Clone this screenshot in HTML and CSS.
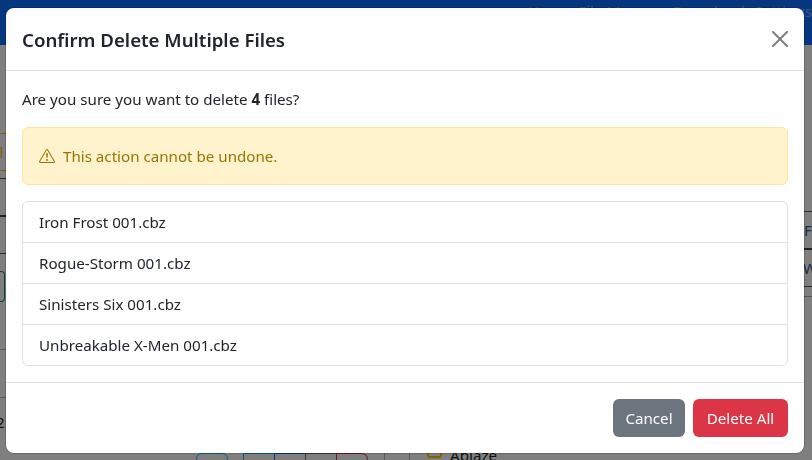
FILE: index.html
```html
<!DOCTYPE html>
<html lang="en">
<head>
<meta charset="utf-8">
<title>Confirm Delete Multiple Files</title>
<link rel="stylesheet" href="styles.css">
</head>
<body>
<div class="page">
  <header class="navbar">
    <span class="nav-link home">Home</span>
    <span class="nav-link files">File Manager</span>
    <span class="nav-link downloads">Downloads</span>
    <span class="nav-link settings">Settings</span>
  </header>
  <main class="content">
    <div class="strip strip-left">
      <div class="row row-a"></div>
      <div class="row row-b"><span class="tab">Cl</span></div>
      <div class="row row-c"></div>
      <div class="row row-d"></div>
      <div class="row row-e"></div>
      <div class="row row-f"><span class="green-btn"></span></div>
      <div class="row row-g"></div>
      <div class="row row-h"><span class="count">2</span></div>
    </div>
    <div class="center">
      <div class="tools">
        <span class="tool tool-teal"></span>
        <div class="tool-group">
          <span class="seg seg-teal"></span>
          <span class="seg seg-blue"></span>
          <span class="seg seg-gray"></span>
          <span class="seg seg-red"></span>
        </div>
      </div>
      <div class="panel">
        <span class="check"></span>
        <span class="check-label">Ablaze</span>
      </div>
    </div>
    <div class="strip strip-right">
      <div class="rrow rrow-a"></div>
      <div class="rrow rrow-b">F</div>
      <div class="rrow rrow-c">W</div>
      <div class="rrow rrow-d"></div>
    </div>
  </main>
</div>
<div class="backdrop"></div>
<div class="modal">
  <div class="modal-header">
    <h5 class="modal-title">Confirm Delete Multiple Files</h5>
    <svg class="close" viewBox="0 0 16 16" width="16" height="16" aria-label="Close"><path d="M.293.293a1 1 0 0 1 1.414 0L8 6.586 14.293.293a1 1 0 1 1 1.414 1.414L9.414 8l6.293 6.293a1 1 0 0 1-1.414 1.414L8 9.414l-6.293 6.293a1 1 0 0 1-1.414-1.414L6.586 8 .293 1.707a1 1 0 0 1 0-1.414"/></svg>
  </div>
  <div class="modal-body">
    <p class="lead">Are you sure you want to delete <strong>4</strong> files?</p>
    <div class="alert">
      <svg class="alert-icon" viewBox="0 0 16 16" width="16" height="16"><path fill="currentColor" d="M7.938 2.016A.13.13 0 0 1 8.002 2a.13.13 0 0 1 .063.016.15.15 0 0 1 .054.057l6.857 11.667c.036.06.035.124.002.183a.2.2 0 0 1-.054.06.1.1 0 0 1-.066.017H1.146a.1.1 0 0 1-.066-.017.2.2 0 0 1-.054-.06.18.18 0 0 1 .002-.183L7.884 2.073a.15.15 0 0 1 .054-.057m1.044-.45a1.13 1.13 0 0 0-1.96 0L.165 13.233c-.457.778.091 1.767.98 1.767h13.713c.889 0 1.438-.99.98-1.767z"/><path fill="currentColor" d="M7.002 12a1 1 0 1 1 2 0 1 1 0 0 1-2 0M7.1 5.995a.905.905 0 1 1 1.8 0l-.35 3.507a.552.552 0 0 1-1.1 0z"/></svg>
      <span>This action cannot be undone.</span>
    </div>
    <ul class="file-list">
      <li>Iron Frost 001.cbz</li>
      <li>Rogue-Storm 001.cbz</li>
      <li>Sinisters Six 001.cbz</li>
      <li>Unbreakable X-Men 001.cbz</li>
    </ul>
  </div>
  <div class="modal-footer">
    <button class="btn btn-cancel">Cancel</button>
    <button class="btn btn-delete">Delete All</button>
  </div>
</div>
</body>
</html>
```
FILE: styles.css
```css
* { box-sizing: border-box; }
html, body { margin: 0; height: 100%; overflow: hidden; }
body {
  font-family: "Noto Sans", "Open Sans", sans-serif;
  font-size: 15.15px;
  line-height: 24px;
  color: #212529;
  background: #fff;
}
.page { height: 460px; display: flex; flex-direction: column; overflow: hidden; }

/* Page under the dialog */
.navbar {
  height: 45px;
  flex: none;
  background: #0d6efd;
  display: flex;
  color: rgba(255, 255, 255, 0.45);
  line-height: 20px;
  padding: 1px 0 0 528px;
  white-space: nowrap;
}
.home { width: 58px; }
.files { width: 109px; }
.downloads { width: 94px; }
.content { flex: 1; display: flex; min-height: 0; }
.strip { flex: none; overflow: hidden; }
.strip-left { width: 6px; }
.row { border-bottom: 1px solid #aaa; }
.row-a { height: 88px; border-color: transparent; }
.row-b { height: 38px; border-top: 1px solid #ffc107; border-bottom: 1px solid #ffc107; color: #ffc107; line-height: 36px; }
.row-b .tab { display: block; margin-left: -10px; }
.row-c { height: 8px; border-color: #555; }
.row-d { height: 38px; border-bottom: 2px solid #444; }
.row-e { height: 37px; border-color: #555; }
.row-f { height: 96px; padding-top: 17px; border-color: #b4b4b4; }
.green-btn { display: block; width: 5px; height: 31px; border: 1px solid #198754; border-left: 0; border-radius: 0 4px 4px 0; }
.row-g { height: 48px; border-color: #b4b4b4; }
.row-h { height: 50px; border: 0; padding-top: 12px; }
.count { display: block; margin-left: -4px; }

.center { flex: 1; display: flex; align-items: stretch; padding-top: 408px; min-width: 0; }
.tools { display: flex; gap: 15px; margin-left: 190px; width: 189px; border-right: 1px solid #b4b4b4; }
.tool { width: 32px; height: 12px; border: 1px solid #0dcaf0; border-radius: 6px 6px 0 0; }
.tool-group { display: flex; height: 12px; }
.seg { width: 31px; border: 1px solid; border-right: 0; }
.seg-teal { border-color: #0dcaf0; }
.seg-blue { border-color: #0d6efd; }
.seg-gray { border-color: #6c757d; }
.seg-red { width: 32px; border-color: #dc3545; border-right: 1px solid #dc3545; border-radius: 0 6px 6px 0; }
.panel { display: flex; align-items: flex-start; gap: 8px; margin-left: 24px; padding-left: 17px; border-left: 1px solid #b4b4b4; }
.check { width: 15px; height: 15px; margin-top: -10px; border: 2px solid #ffc107; border-radius: 3px; }
.check-label { margin-top: -8px; line-height: 20px; }

.strip-right { width: 8px; }
.rrow { overflow: hidden; color: #3a5a8c; font-size: 15px; white-space: nowrap; }
.rrow-a { height: 167px; border-bottom: 1px solid #555; }
.rrow-b { height: 38px; padding-top: 6px; border-bottom: 2px solid #444; }
.rrow-c { height: 37px; padding-top: 6px; border-bottom: 1px solid #555; margin-left: -1px; }
.rrow-d { height: 10px; border-bottom: 1px solid #aaa; }

.backdrop { position: fixed; inset: 0; background: rgba(0, 0, 0, 0.5); }

/* Dialog */
.modal {
  position: fixed;
  left: 6px;
  top: 8px;
  width: 798px;
  height: 445px;
  background: #fff;
  border-radius: 8px;
  box-shadow: 0 0 0 1px rgba(0, 0, 0, 0.18);
  display: flex;
  flex-direction: column;
}
.modal-header {
  height: 63px;
  flex: none;
  padding: 0 16px;
  display: flex;
  align-items: center;
  justify-content: space-between;
  border-bottom: 1px solid #dee2e6;
}
.modal-title { margin: 0; padding-top: 2px; font-size: 18.65px; line-height: 30px; font-weight: 600; }
.close { opacity: 0.5; }
.modal-body { flex: 1; padding: 16px; }
.lead { margin: 0 0 16px; height: 24px; }
.alert {
  height: 58px;
  display: flex;
  align-items: center;
  gap: 8px;
  padding: 0 16px;
  margin-bottom: 16px;
  background: #fff3cd;
  border: 1px solid #ffe69c;
  border-radius: 6px;
  color: #997404;
}
.alert-icon { flex: none; }
.file-list {
  list-style: none;
  margin: 0;
  padding: 0;
  border: 1px solid #dee2e6;
  border-radius: 6px;
}
.file-list li { height: 41px; padding: 8px 16px 0; border-top: 1px solid #dee2e6; }
.file-list li:first-child { height: 40px; border-top: 0; }
.modal-footer {
  height: 71px;
  flex: none;
  display: flex;
  justify-content: flex-end;
  align-items: center;
  gap: 8px;
  padding: 0 16px;
  border-top: 1px solid #dee2e6;
}
.btn {
  height: 38px;
  padding: 0;
  border: 0;
  border-radius: 6px;
  color: #fff;
  font: inherit;
}
.btn-cancel { width: 72px; background: #6c757d; }
.btn-delete { width: 95px; background: #dc3545; }
```
